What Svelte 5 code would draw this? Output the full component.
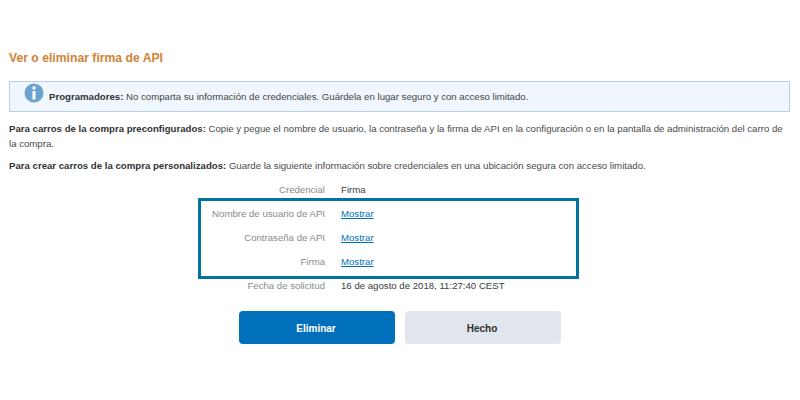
<script>
  const rows = [
    { label: 'Credencial', value: 'Firma' },
    { label: 'Nombre de usuario de API', link: 'Mostrar' },
    { label: 'Contraseña de API', link: 'Mostrar' },
    { label: 'Firma', link: 'Mostrar' },
    { label: 'Fecha de solicitud', value: '16 de agosto de 2018, 11:27:40 CEST' }
  ];
</script>

<main class="page">
  <h1>Ver o eliminar firma de API</h1>
  <div class="notice">
    <svg class="info" viewBox="0 0 20 20" width="20" height="20" aria-hidden="true">
      <circle cx="10" cy="10" r="9.5" fill="#6da3d0" />
      <circle cx="10" cy="5" r="1.7" fill="#fff" />
      <rect x="8.5" y="8" width="3" height="8.5" fill="#fff" />
    </svg>
    <p><b>Programadores:</b> No comparta su información de credenciales. Guárdela en lugar seguro y con acceso limitado.</p>
  </div>
  <p class="para"><b>Para carros de la compra preconfigurados:</b> Copie y pegue el nombre de usuario, la contraseña y la firma de API en la configuración o en la pantalla de administración del carro de la compra.</p>
  <p class="para second"><b>Para crear carros de la compra personalizados:</b> Guarde la siguiente información sobre credenciales en una ubicación segura con acceso limitado.</p>

  <div class="details">
    {#each rows as row}
      <div class="label">{row.label}</div>
      <div class="value">
        {#if row.link}<a href="#top">{row.link}</a>{:else}{row.value}{/if}
      </div>
    {/each}
    <div class="highlight"></div>
  </div>

  <div class="actions">
    <button class="primary">Eliminar</button>
    <button class="secondary">Hecho</button>
  </div>
</main>

<style>
  :global(body) {
    margin: 0;
    background: #fff;
  }
  .page {
    width: 800px;
    height: 400px;
    box-sizing: border-box;
    padding: 50px 10px 0 9px;
    font-family: "Liberation Sans", Arial, sans-serif;
    font-size: 9.64px;
    color: #4a4a4a;
    overflow: hidden;
  }
  h1 {
    margin: 0 0 14px;
    font-size: 12.2px;
    line-height: 17px;
    font-weight: 700;
    color: #d08335;
  }
  .notice {
    display: flex;
    height: 31px;
    box-sizing: border-box;
    border: 1px solid #b5d0e8;
    background: #f0f6fd;
    padding-left: 14px;
    position: relative;
  }
  .info {
    flex: none;
    margin-top: 1px;
  }
  .notice p {
    margin: 0 0 0 5px;
    line-height: 30px;
    color: #444;
  }
  b {
    font-weight: 700;
    color: #333;
  }
  .para {
    margin: 9px 0 0;
    line-height: 15px;
  }
  .second {
    margin-top: 7px;
  }
  .details {
    position: relative;
    display: grid;
    grid-template-columns: 316px 1fr;
    grid-auto-rows: 24px;
    column-gap: 16px;
    margin-top: 4px;
    align-items: center;
  }
  .label {
    text-align: right;
    color: #8a8a8a;
  }
  .value {
    color: #3c3c3c;
  }
  a {
    color: #0070ba;
  }
  .highlight {
    position: absolute;
    left: 189px;
    top: 21px;
    width: 381px;
    height: 81px;
    box-sizing: border-box;
    border: 3px solid #00739f;
    pointer-events: none;
  }
  .actions {
    display: flex;
    gap: 10px;
    margin: 14px 0 0 230px;
  }
  button {
    width: 156px;
    height: 33px;
    border: 0;
    border-radius: 4px;
    padding: 1px 8px 0 6px;
    font: 700 10px "Liberation Sans", Arial, sans-serif;
  }
  .primary {
    background: #0070ba;
    color: #fff;
  }
  .secondary {
    background: #e1e6ec;
    color: #2c2e2f;
  }
</style>
